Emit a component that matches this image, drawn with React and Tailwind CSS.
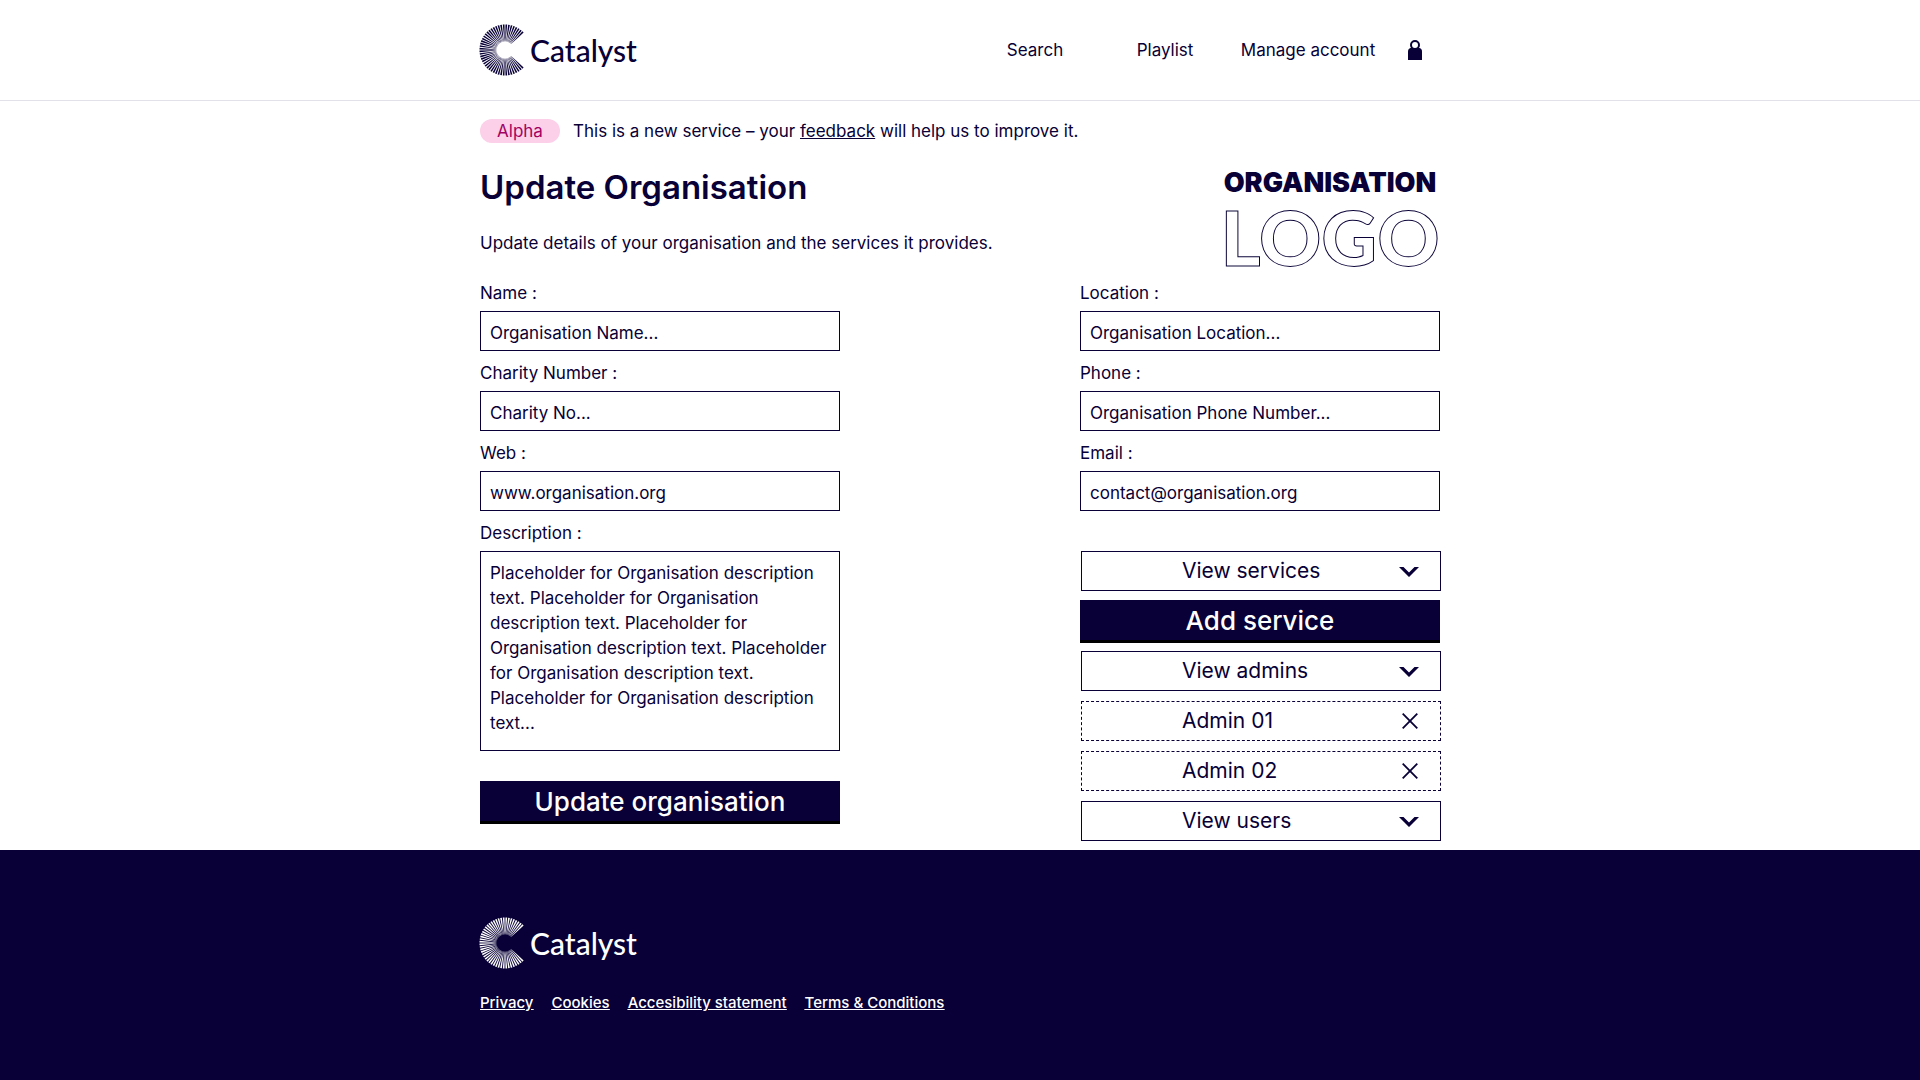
import React from "react";

const NAVY = "#080036";

function CatalystLogo() {
  const rays = Array.from({ length: 46 }, (_, i) => 45 + i * 6);
  return (
    <span className="flex items-center gap-[6px] font-['Lato',sans-serif]">
      <svg viewBox="-26 -26 45 52" className="-ml-px h-[52px] w-[45px] shrink-0" aria-hidden="true">
        {rays.map((a) => (
          <polygon key={a} points="8.5,-0.15 25.5,-0.85 25.5,0.85 8.5,0.15" fill="currentColor" transform={`rotate(${a})`} />
        ))}
      </svg>
      <span className="text-[30px] font-medium leading-[36px]">Catalyst</span>
    </span>
  );
}

function Chevron() {
  return (
    <svg viewBox="0 0 20 10" className="mt-0.5 h-[10px] w-5" fill="currentColor" aria-hidden="true">
      <path d="M0 0H4.500L10 5.500L15.500 0H20L10 10Z" />
    </svg>
  );
}

function Cross() {
  return (
    <svg viewBox="0 0 16 16" className="mr-px h-4 w-4" fill="none" stroke="currentColor" strokeWidth="1.8" aria-hidden="true">
      <path d="M0.700 0.700L15.300 15.300M15.300 0.700L0.700 15.300" />
    </svg>
  );
}

function Field({ id, label, value, type = "text" }) {
  return (
    <div className="flex flex-col">
      <label htmlFor={id} className="h-[30px] leading-6">{label}</label>
      <input id={id} type={type} placeholder={value} className="mb-[10px] h-10 w-full border border-[#080036] bg-white px-[9px] pt-[3px] placeholder:text-[#080036] placeholder:opacity-100" />
    </div>
  );
}

function Row({ label, icon, dashed }) {
  return (
    <button
      type="button"
      className={
        "mb-[10px] ml-px flex h-10 w-full items-center justify-between border border-[#080036] bg-white pl-[100px] pr-[21px] text-[21px] leading-7 " +
        (dashed ? "border-dashed" : "border-solid")
      }
    >
      <span>{label}</span>
      {icon}
    </button>
  );
}

function PrimaryButton({ children }) {
  return (
    <button type="button" className="h-[43px] w-full border-b-[3px] border-black bg-[#080036] pt-0.5 text-[26px] font-medium leading-8 text-white">
      {children}
    </button>
  );
}

const description =
  "Placeholder for Organisation description text. Placeholder for Organisation description text. Placeholder for Organisation description text. Placeholder for Organisation description text. Placeholder for Organisation description text...";

export default function App() {
  return (
    <div className="flex min-h-screen flex-col bg-white font-['Inter',sans-serif] text-[17px] text-[#080036]">
      <header className="border-b border-[#e2e1ea]">
        <div className="mx-auto flex h-[100px] w-full max-w-[960px] items-center justify-between">
          <a href="#home"><CatalystLogo /></a>
          <nav className="flex items-center text-center leading-6">
            <a href="#search" className="w-[130px]">Search</a>
            <a href="#playlist" className="w-[130px]">Playlist</a>
            <a href="#account" className="w-[156px]">Manage account</a>
            <a href="#lock" aria-label="Log out" className="w-[54px] pl-[22px]">
              <svg viewBox="0 0 14 20" className="h-5 w-[14px]" aria-hidden="true">
                <circle cx="7" cy="5" r="4" fill="none" stroke={NAVY} strokeWidth="2" />
                <path d="M0 20V11.500Q0 8.500 2.500 8H11.500Q14 8.500 14 11.500V20Z" fill={NAVY} />
              </svg>
            </a>
          </nav>
        </div>
      </header>

      <main className="mx-auto w-full max-w-[960px] pt-[18px]">
        <div className="flex items-center gap-[13px] leading-6">
          <span className="w-20 rounded-full bg-[#fbd0e8] text-center text-[#a30262]">Alpha</span>
          <p>
            This is a new service – your <a href="#feedback" className="underline">feedback</a> will help us to improve it.
          </p>
        </div>

        <div className="mt-6 flex items-start justify-between">
          <div>
            <h1 className="text-[33px] font-semibold leading-[40px]">Update Organisation</h1>
            <p className="mt-6 leading-6">Update details of your organisation and the services it provides.</p>
          </div>
          <div className="flex w-[220px] flex-col items-center">
            <span className="text-[27px] font-black leading-[32px]">ORGANISATION</span>
            <span className="font-['Lato',sans-serif] text-[77px] font-black leading-[74px] text-transparent [-webkit-text-stroke:1px_#080036]">LOGO</span>
          </div>
        </div>

        <form className="mt-2 flex justify-between gap-8">
          <div className="w-[360px]">
            <Field id="name" label="Name :" value="Organisation Name..." />
            <Field id="charity" label="Charity Number :" value="Charity No..." />
            <Field id="web" label="Web :" value="www.organisation.org" />
            <label htmlFor="description" className="block h-[30px] leading-6">Description :</label>
            <textarea id="description" placeholder={description} className="mb-[30px] block h-[200px] w-full resize-none overflow-hidden border border-[#080036] px-[9px] pb-2 pt-[9px] leading-[25px] placeholder:text-[#080036] placeholder:opacity-100" />
            <PrimaryButton>Update organisation</PrimaryButton>
          </div>
          <div className="w-[360px]">
            <Field id="location" label="Location :" value="Organisation Location..." />
            <Field id="phone" label="Phone :" value="Organisation Phone Number..." />
            <Field id="email" label="Email :" type="email" value="contact@organisation.org" />
            <div className="mt-[30px]">
              <Row label="View services" icon={<Chevron />} />
              <div className="-mt-px mb-2">
                <PrimaryButton>Add service</PrimaryButton>
              </div>
              <Row label="View admins" icon={<Chevron />} />
              <Row label="Admin 01" icon={<Cross />} dashed />
              <Row label="Admin 02" icon={<Cross />} dashed />
              <Row label="View users" icon={<Chevron />} />
            </div>
          </div>
        </form>
      </main>

      <footer className="-mt-px flex-1 bg-[#080036] text-white">
        <div className="mx-auto w-full max-w-[960px] pb-16 pt-[67px]">
          <a href="#home"><CatalystLogo /></a>
          <nav className="mt-[22px] flex gap-[18px] text-[15px] font-medium leading-6 underline">
            <a href="#privacy">Privacy</a>
            <a href="#cookies">Cookies</a>
            <a href="#accessibility">Accesibility statement</a>
            <a href="#terms">Terms &amp; Conditions</a>
          </nav>
        </div>
      </footer>
    </div>
  );
}
